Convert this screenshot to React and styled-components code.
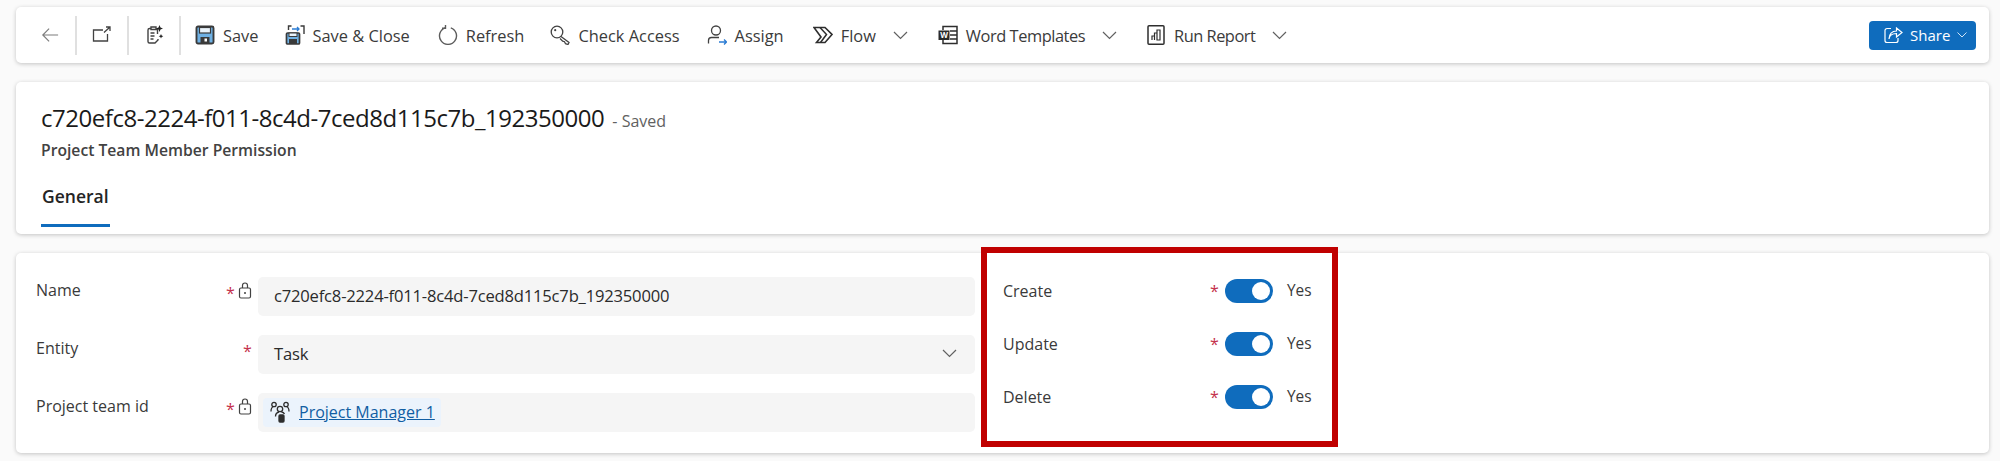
import React from "react";
import styled, { createGlobalStyle } from "styled-components";

const GlobalStyle = createGlobalStyle`
    html, body {
        margin: 0;
        padding: 0;
        background: #fafafa;
        font-family: "Open Sans", "Noto Sans", sans-serif;
        color: #242424;
    }
`;

const Page = styled.div`
    display: flex;
    flex-direction: column;
    gap: 19px;
    padding: 7px 11px 8px 16px;
    width: 2000px;
    box-sizing: border-box;
`;

const Card = styled.div`
    position: relative;
    background: #fff;
    border-radius: 5px;
    box-shadow: 0 1px 4px rgba(0, 0, 0, 0.22);
`;

const Toolbar = styled(Card)`
    display: flex;
    align-items: center;
    height: 56px;
    padding: 0 13px 0 25px;
    box-sizing: border-box;
`;

const NavIcon = styled.span`
    display: flex;
    align-items: center;
    justify-content: center;
    width: ${(p) => p.$width}px;
`;

const Divider = styled.span`
    width: 2px;
    height: 39px;
    background: #e0e0e0;
`;

const ToolButton = styled.div`
    display: flex;
    align-items: center;
    gap: 8px;
    margin-left: ${(p) => p.$left}px;
    font-size: 16.4px;
    letter-spacing: ${(p) => p.$squeeze || 0}px;
    white-space: nowrap;
    color: #3b3b3b;
    svg {
        flex: none;
    }
`;

const Caret = styled.svg`
    margin-left: 9px;
`;

const ShareButton = styled.div`
    display: flex;
    align-items: center;
    margin-left: auto;
    height: 29px;
    width: 107px;
    padding-left: 15px;
    box-sizing: border-box;
    background: #0f6cbd;
    border-radius: 4px;
    color: #fff;
    font-size: 15px;
    gap: 7px;
`;

const Header = styled(Card)`
    height: 152px;
    padding: 19px 0 0 25px;
    box-sizing: border-box;
`;

const TitleRow = styled.div`
    display: flex;
    align-items: baseline;
    gap: 8px;
    height: 34px;
    line-height: 34px;
`;

const Title = styled.span`
    font-size: 24px;
    font-weight: 500;
    letter-spacing: -0.47px;
    color: #1a1a1a;
`;

const Saved = styled.span`
    font-size: 16px;
    color: #616161;
`;

const Subtitle = styled.div`
    margin-top: 4px;
    font-size: 15.7px;
    line-height: 22px;
    font-weight: 600;
    color: #424242;
`;

const Tab = styled.div`
    display: inline-block;
    margin-top: 23px;
    padding: 0 1px 16px;
    line-height: 24px;
    font-size: 17.5px;
    font-weight: 600;
    border-bottom: 3px solid #0f6cbd;
`;

const FormCard = styled(Card)`
    display: grid;
    grid-template-columns: 939px 1fr;
    column-gap: 28px;
    height: 200px;
    padding: 24px 0 0 20px;
    box-sizing: border-box;
`;

const LeftFields = styled.div`
    display: flex;
    flex-direction: column;
    gap: 19px;
`;

const FieldRow = styled.div`
    display: grid;
    grid-template-columns: 190px 32px 1fr;
    height: 39px;
`;

const Label = styled.div`
    font-size: 16px;
    line-height: 22px;
    margin-top: 2px;
    color: #3a3a3a;
`;

const Marks = styled.div`
    display: flex;
    justify-content: ${(p) => (p.$locked ? "flex-start" : "flex-end")};
    padding-right: ${(p) => (p.$locked ? 0 : 8)}px;
    gap: 5px;
    margin-top: 5px;
`;

const Asterisk = styled.span`
    color: #c4314b;
    font-size: 16px;
    line-height: 22px;
    width: 7px;
`;

const Input = styled.div`
    display: flex;
    align-items: center;
    justify-content: space-between;
    background: #f5f5f5;
    border-radius: 5px;
    padding: 0 18px 3px 16px;
    font-size: 16.6px;
    letter-spacing: -0.2px;
    color: #2b2b2b;
`;

const LookupInput = styled(Input)`
    padding: 5px;
    justify-content: flex-start;
    letter-spacing: 0;
`;

const Tag = styled.div`
    display: flex;
    align-items: center;
    gap: 9px;
    height: 100%;
    padding: 0 6px 2px 7px;
    box-sizing: border-box;
    background: #ebf3fc;
    border-radius: 4px;
`;

const TagLink = styled.span`
    color: #115ea3;
    text-decoration: underline;
    font-size: 16px;
    white-space: nowrap;
`;

const RightFields = styled.div`
    display: flex;
    flex-direction: column;
    gap: 29px;
    padding-top: 2px;
`;

const ToggleRow = styled.div`
    display: flex;
    align-items: center;
    height: 24px;
`;

const ToggleLabel = styled.div`
    width: 207px;
    margin-top: -1px;
    font-size: 16px;
    color: #3a3a3a;
`;

const Track = styled.span`
    display: flex;
    align-items: center;
    justify-content: flex-end;
    width: 48px;
    height: 24px;
    margin-left: 8px;
    padding-right: 3px;
    box-sizing: border-box;
    background: #0f6cbd;
    border-radius: 12px;
`;

const Thumb = styled.span`
    width: 18px;
    height: 18px;
    border-radius: 50%;
    background: #fff;
`;

const YesText = styled.span`
    margin-left: 14px;
    margin-top: -1px;
    font-size: 15.4px;
    color: #3a3a3a;
`;

const Highlight = styled.div`
    position: absolute;
    left: 965px;
    top: -6px;
    width: 357px;
    height: 200px;
    box-sizing: border-box;
    border: 6px solid #c00000;
    pointer-events: none;
`;

const Icon = ({ children }) => (
    <svg width="20" height="20" viewBox="0 0 20 20" fill="none" stroke="#424242" strokeWidth="1.3">
        {children}
    </svg>
);

const Chevron = () => (
    <Caret width="15" height="9" viewBox="0 0 15 9" fill="none" stroke="#616161" strokeWidth="1.2">
        <path d="M1 1l6.5 6.5L14 1" />
    </Caret>
);

const Lock = () => (
    <svg width="14" height="17" viewBox="0 0 14 17" fill="none" stroke="#424242" strokeWidth="1.2">
        <rect x="1.5" y="6" width="11" height="10" rx="1.5" />
        <path d="M4.5 6V3.5a2.5 2.5 0 0 1 5 0V6" />
        <circle cx="7" cy="11" r="1" fill="#424242" stroke="none" />
    </svg>
);

const App = () => {
    return (
        <>
            <GlobalStyle />
            <Page>
                <Toolbar>
                    <NavIcon $width={18}>
                        <Icon>
                            <path d="M19 10H2M9 3l-7 7 7 7" stroke="#7d7d7d" />
                        </Icon>
                    </NavIcon>
                    <NavIcon $width={16} />
                    <Divider />
                    <NavIcon $width={50}>
                        <Icon>
                            <path d="M11 5H1.500v11h14V9M12 7.500L18 2M14 2h4v4" />
                        </Icon>
                    </NavIcon>
                    <Divider />
                    <NavIcon $width={50}>
                        <Icon>
                            <path d="M12 4h1.500v5M7 2v2.500h5V2zM7 3.500H5.500A1.500 1.500 0 0 0 4 5v11.500A1.500 1.500 0 0 0 5.500 18H11l3-3v-1" strokeWidth="1.4" />
                            <path d="M6.500 8h4M6.500 11h4M6.500 14h3" />
                            <path d="M15.500 0l1 2.500L19 3.500l-2.500 1-1 2.500-1-2.500L12 3.500l2.500-1zM17 9l.7 1.600 1.600.7-1.600.7-.7 1.600-.7-1.600-1.600-.7 1.600-.7z" fill="#242424" stroke="none" />
                        </Icon>
                    </NavIcon>
                    <Divider />
                    <ToolButton $left={14}>
                        <Icon>
                            <rect x="1.500" y="1.500" width="17" height="17" rx="1.500" fill="#6fb1e4" stroke="#3a3a3a" strokeWidth="1.900" />
                            <rect x="4.500" y="2.500" width="11" height="5.500" fill="#e9f3fb" stroke="#3a3a3a" strokeWidth="1.200" />
                            <rect x="5.500" y="12" width="9" height="6" fill="#3a3a3a" stroke="none" />
                            <rect x="9.500" y="13.500" width="2.500" height="3" fill="#fff" stroke="none" />
                        </Icon>
                        Save
                    </ToolButton>
                    <ToolButton $left={26}>
                        <Icon>
                            <rect x="1.500" y="8" width="13" height="11" rx="1" fill="#6fb1e4" stroke="#3a3a3a" strokeWidth="1.700" />
                            <rect x="4" y="8" width="8" height="3.500" fill="#e9f3fb" stroke="#3a3a3a" strokeWidth="1" />
                            <rect x="4" y="14" width="8" height="5" fill="#3a3a3a" stroke="none" />
                            <path d="M3.500 5V1h3M15.500 1h3.500v8" stroke="#3a3a3a" strokeWidth="1.400" />
                            <path d="M7 4h7M12 2l2 2-2 2" stroke="#2b7cd3" strokeWidth="1.300" />
                        </Icon>
                        Save &amp; Close
                    </ToolButton>
                    <ToolButton $left={28}>
                        <Icon>
                            <path d="M12.800 2.800a8.500 8.500 0 1 1-5.600 0" stroke="#5c5c5c" strokeWidth="1.400" />
                            <path d="M7.500 0v3.300H4" stroke="#5c5c5c" strokeWidth="1.400" />
                        </Icon>
                        Refresh
                    </ToolButton>
                    <ToolButton $left={26}>
                        <Icon>
                            <circle cx="7" cy="7" r="5.800" />
                            <circle cx="5.200" cy="5.200" r="1.100" fill="#424242" stroke="none" />
                            <path d="M11 11.500l8 6-1 2-2.500-.8-1-2-1.800-.5L10 13.500" />
                        </Icon>
                        Check Access
                    </ToolButton>
                    <ToolButton $left={27}>
                        <Icon>
                            <circle cx="9" cy="5.500" r="4.500" />
                            <path d="M1.500 18.500v-3a3 3 0 0 1 3-3h7.500" />
                            <path d="M12 17h7.500M17 14.500l2.500 2.500-2.500 2.500" stroke="#2b7cd3" />
                        </Icon>
                        Assign
                    </ToolButton>
                    <ToolButton $left={29}>
                        <Icon>
                            <path d="M1 2.500h11l7 7-7 8H3.500l4.500-5.500z" strokeWidth="1.600" stroke="#2e2e2e" />
                            <path d="M7 2.500l6.500 7-6 8" strokeWidth="1.500" stroke="#2e2e2e" />
                        </Icon>
                        Flow
                        <Chevron />
                    </ToolButton>
                    <ToolButton $left={30} $squeeze={-0.45}>
                        <Icon>
                            <path d="M5 5V1.500h14v17H5V15M12 6h7M12 10h7M12 14h7" strokeWidth="1.500" stroke="#2e2e2e" />
                            <rect x="0.500" y="5.500" width="11" height="9.500" fill="#2a2a2a" stroke="none" />
                            <text x="6" y="13.300" fontSize="8" fontWeight="700" fill="#fff" stroke="none" textAnchor="middle" fontFamily="Open Sans">W</text>
                        </Icon>
                        Word Templates
                        <Chevron />
                    </ToolButton>
                    <ToolButton $left={29} $squeeze={-0.5}>
                        <Icon>
                            <rect x="2" y="0.800" width="16" height="18.400" rx="1" strokeWidth="1.500" stroke="#2e2e2e" />
                            <path d="M6 15v-4h2.500v4M8.500 15V8h2.500v7M11 15V5h3v10z" strokeWidth="1.200" stroke="#2e2e2e" />
                        </Icon>
                        Run Report
                        <Chevron />
                    </ToolButton>
                    <ShareButton>
                        <svg width="19" height="17" viewBox="0 0 19 17" fill="none" stroke="#fff" strokeWidth="1.200">
                            <path d="M7 1.500H3A2 2 0 0 0 1 3.500v10a2 2 0 0 0 2 2h9a2 2 0 0 0 2-2V11" />
                            <path d="M5 12c.5-3.500 3-5.500 7.500-5.500V10L18 5.500 12.500 1v3C8 4 5 7 5 12z" />
                        </svg>
                        Share
                        <svg width="10" height="6" viewBox="0 0 10 6" fill="none" stroke="#cfe3f5" strokeWidth="1">
                            <path d="M.5.5L5 5 9.500.5" />
                        </svg>
                    </ShareButton>
                </Toolbar>

                <Header>
                    <TitleRow>
                        <Title>c720efc8-2224-f011-8c4d-7ced8d115c7b_192350000</Title>
                        <Saved>- Saved</Saved>
                    </TitleRow>
                    <Subtitle>Project Team Member Permission</Subtitle>
                    <Tab>General</Tab>
                </Header>

                <FormCard>
                    <LeftFields>
                        <FieldRow>
                            <Label>Name</Label>
                            <Marks $locked>
                                <Asterisk>*</Asterisk>
                                <Lock />
                            </Marks>
                            <Input>c720efc8-2224-f011-8c4d-7ced8d115c7b_192350000</Input>
                        </FieldRow>
                        <FieldRow>
                            <Label>Entity</Label>
                            <Marks>
                                <Asterisk>*</Asterisk>
                            </Marks>
                            <Input>
                                Task
                                <svg width="15" height="9" viewBox="0 0 15 9" fill="none" stroke="#616161" strokeWidth="1.200">
                                    <path d="M1 1l6.500 6.500L14 1" />
                                </svg>
                            </Input>
                        </FieldRow>
                        <FieldRow>
                            <Label>Project team id</Label>
                            <Marks $locked>
                                <Asterisk>*</Asterisk>
                                <Lock />
                            </Marks>
                            <LookupInput>
                                <Tag>
                                    <svg width="20" height="22" viewBox="0 0 20 22" fill="none" stroke="#2e2e2e" strokeWidth="1.300">
                                        <circle cx="4" cy="3.500" r="2.200" />
                                        <circle cx="16" cy="3.500" r="2.200" />
                                        <circle cx="10" cy="8" r="2.700" />
                                        <path d="M1 10.500c0-3 1-4.500 2.500-5M19 10.500c0-3-1-4.500-2.500-5M5.500 15.500c0-2.500 1.500-4 3.500-4.500M14.500 13c-.5-1-1.500-1.700-3-2" />
                                        <rect x="9" y="14" width="5" height="7" rx="1" fill="#2e2e2e" />
                                    </svg>
                                    <TagLink>Project Manager 1</TagLink>
                                </Tag>
                            </LookupInput>
                        </FieldRow>
                    </LeftFields>
                    <RightFields>
                        {["Create", "Update", "Delete"].map((name) => (
                            <ToggleRow key={name}>
                                <ToggleLabel>{name}</ToggleLabel>
                                <Asterisk>*</Asterisk>
                                <Track>
                                    <Thumb />
                                </Track>
                                <YesText>Yes</YesText>
                            </ToggleRow>
                        ))}
                    </RightFields>
                    <Highlight />
                </FormCard>
            </Page>
        </>
    );
};

export default App;
